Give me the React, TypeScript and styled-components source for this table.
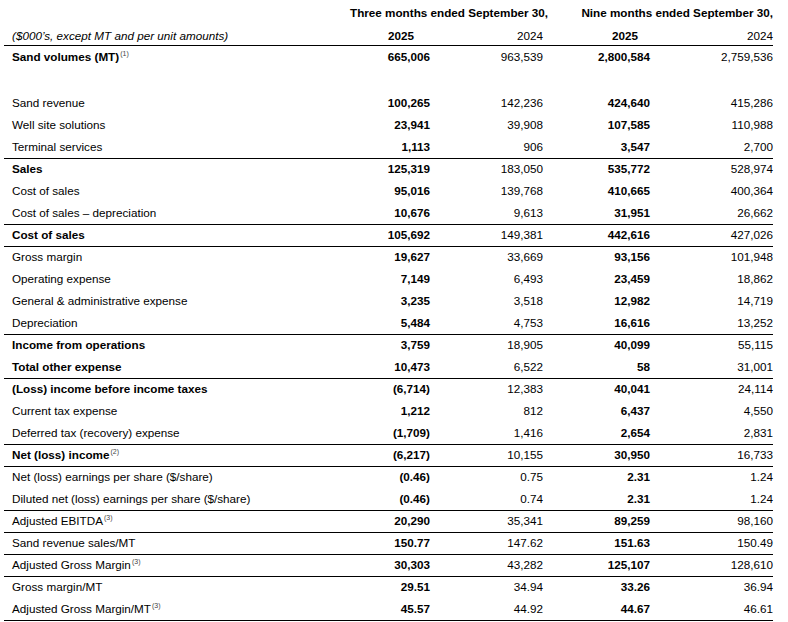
import React from "react";
import styled, { createGlobalStyle, css } from "styled-components";

const GlobalStyle = createGlobalStyle`
  html, body {
    margin: 0;
    padding: 0;
    background: #ffffff;
  }
  body {
    font-family: "Liberation Sans", Arial, sans-serif;
    color: #000000;
  }
`;

type Line = {
  label: string;
  note?: number;
  values: [string, string, string, string];
  bold?: boolean;
  top?: boolean;
  bottom?: boolean;
};

const lines: Line[] = [
  { label: "Sand revenue", values: ["100,265", "142,236", "424,640", "415,286"] },
  { label: "Well site solutions", values: ["23,941", "39,908", "107,585", "110,988"] },
  { label: "Terminal services", values: ["1,113", "906", "3,547", "2,700"] },
  { label: "Sales", values: ["125,319", "183,050", "535,772", "528,974"], bold: true, top: true },
  { label: "Cost of sales", values: ["95,016", "139,768", "410,665", "400,364"] },
  { label: "Cost of sales – depreciation", values: ["10,676", "9,613", "31,951", "26,662"] },
  { label: "Cost of sales", values: ["105,692", "149,381", "442,616", "427,026"], bold: true, top: true },
  { label: "Gross margin", values: ["19,627", "33,669", "93,156", "101,948"], top: true },
  { label: "Operating expense", values: ["7,149", "6,493", "23,459", "18,862"] },
  { label: "General & administrative expense", values: ["3,235", "3,518", "12,982", "14,719"] },
  { label: "Depreciation", values: ["5,484", "4,753", "16,616", "13,252"] },
  { label: "Income from operations", values: ["3,759", "18,905", "40,099", "55,115"], bold: true, top: true },
  { label: "Total other expense", values: ["10,473", "6,522", "58", "31,001"], bold: true },
  { label: "(Loss) income before income taxes", values: ["(6,714)", "12,383", "40,041", "24,114"], bold: true, top: true },
  { label: "Current tax expense", values: ["1,212", "812", "6,437", "4,550"] },
  { label: "Deferred tax (recovery) expense", values: ["(1,709)", "1,416", "2,654", "2,831"] },
  { label: "Net (loss) income", note: 2, values: ["(6,217)", "10,155", "30,950", "16,733"], bold: true, top: true },
  { label: "Net (loss) earnings per share ($/share)", values: ["(0.46)", "0.75", "2.31", "1.24"], top: true },
  { label: "Diluted net (loss) earnings per share ($/share)", values: ["(0.46)", "0.74", "2.31", "1.24"] },
  { label: "Adjusted EBITDA", note: 3, values: ["20,290", "35,341", "89,259", "98,160"], top: true },
  { label: "Sand revenue sales/MT", values: ["150.77", "147.62", "151.63", "150.49"], top: true },
  { label: "Adjusted Gross Margin", note: 3, values: ["30,303", "43,282", "125,107", "128,610"], top: true },
  { label: "Gross margin/MT", values: ["29.51", "34.94", "33.26", "36.94"], top: true },
  { label: "Adjusted Gross Margin/MT", note: 3, values: ["45.57", "44.92", "44.67", "46.61"], bottom: true },
];

export default function App() {
  return (
    <>
      <GlobalStyle />
      <Table>
        <PeriodRow>
          <span />
          <Period>Three months ended September 30,</Period>
          <Period>Nine months ended September 30,</Period>
        </PeriodRow>
        <YearRow>
          <Caption>($000’s, except MT and per unit amounts)</Caption>
          <Year $bold $pad={16}>2025</Year>
          <Year>2024</Year>
          <Year $bold $pad={12}>2025</Year>
          <Year>2024</Year>
        </YearRow>
        <Row $bold>
          <Label>
            Sand volumes (MT)<Note>(1)</Note>
          </Label>
          <Value $bold>665,006</Value>
          <Value>963,539</Value>
          <Value $bold>2,800,584</Value>
          <Value>2,759,536</Value>
        </Row>
        <Spacer />
        {lines.map((line, i) => (
          <Row key={`line-${i}`} $bold={line.bold} $top={line.top} $bottom={line.bottom}>
            <Label>
              {line.label}
              {line.note && <Note>({line.note})</Note>}
            </Label>
            {line.values.map((v, j) => (
              <Value key={j} $bold={j % 2 === 0}>
                {v}
              </Value>
            ))}
          </Row>
        ))}
      </Table>
    </>
  );
}

const columns = "346px 80px 113px 107px 123px";

const Table = styled.div`
  width: 769px;
  padding: 0 11px 0 4px;
  font-size: 11.7px;
  line-height: 14px;
`;

const PeriodRow = styled.div`
  display: grid;
  grid-template-columns: 346px 193px 230px;
  align-items: center;
  height: 24px;
  padding-top: 2px;
  box-sizing: border-box;
  font-weight: bold;
`;

const Period = styled.div`
  text-align: right;
  white-space: nowrap;
`;

const YearRow = styled.div`
  display: grid;
  grid-template-columns: ${columns};
  align-items: center;
  height: 22px;
  box-sizing: border-box;
  padding-top: 3px;
  border-bottom: 1px solid #000;
`;

const Caption = styled.div`
  font-style: italic;
  padding-left: 8px;
  white-space: nowrap;
`;

const Year = styled.div<{ $bold?: boolean; $pad?: number }>`
  text-align: right;
  font-weight: ${(p) => (p.$bold ? "bold" : "normal")};
  padding-right: ${(p) => p.$pad ?? 0}px;
`;

const Row = styled.div<{ $bold?: boolean; $top?: boolean; $bottom?: boolean }>`
  display: grid;
  grid-template-columns: ${columns};
  align-items: center;
  height: 22px;
  box-sizing: border-box;
  padding-bottom: 1px;
  border-top: 1px solid transparent;

  ${(p) =>
    p.$top &&
    css`
      border-top-color: #000;
    `}

  ${(p) =>
    p.$bottom &&
    css`
      border-bottom: 1px solid #000;
      height: 23px;
    `}

  & > div:first-child {
    font-weight: ${(p) => (p.$bold ? "bold" : "normal")};
  }
`;

const Spacer = styled.div`
  height: 24px;
`;

const Label = styled.div`
  padding-left: 8px;
  white-space: nowrap;
`;

const Note = styled.sup`
  font-size: 7px;
  font-weight: normal;
  color: #444;
  line-height: 0;
  vertical-align: 5px;
  margin-left: 1px;
`;

const Value = styled.div<{ $bold?: boolean }>`
  text-align: right;
  white-space: nowrap;
  font-weight: ${(p) => (p.$bold ? "bold" : "normal")};
`;
